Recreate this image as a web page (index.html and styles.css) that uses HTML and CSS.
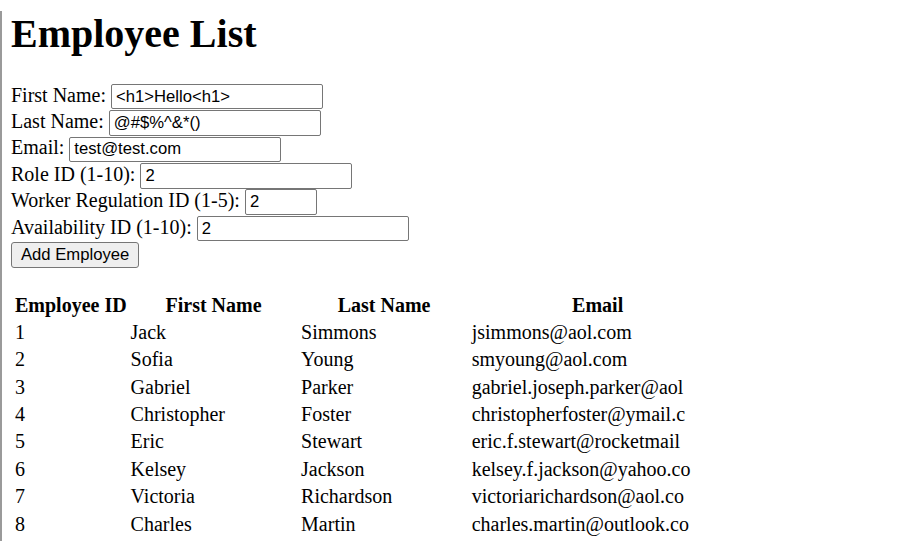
FILE: index.html
```html
<!DOCTYPE html>
<html lang="en">
<head>
<meta charset="utf-8">
<title>Employee List</title>
<link rel="stylesheet" href="styles.css">
</head>
<body>
<div class="page">
  <h1 class="title">Employee List</h1>
  <form class="emp-form">
    <div class="row"><label class="lbl">First Name:</label> <input class="field" type="text" value="&lt;h1&gt;Hello&lt;h1&gt;"></div>
    <div class="row"><label class="lbl">Last Name:</label> <input class="field" type="text" value="@#$%^&amp;*()"></div>
    <div class="row"><label class="lbl">Email:</label> <input class="field" type="text" value="test@test.com"></div>
    <div class="row"><label class="lbl">Role ID (1-10):</label> <input class="field" type="text" value="2"></div>
    <div class="row"><label class="lbl">Worker Regulation ID (1-5):</label> <input class="field field-small" type="text" value="2"></div>
    <div class="row"><label class="lbl">Availability ID (1-10):</label> <input class="field" type="text" value="2"></div>
    <div class="row"><button class="btn" type="button">Add Employee</button></div>
  </form>
  <table class="emp-table">
    <thead>
      <tr><th class="c1">Employee ID</th><th class="c2">First Name</th><th class="c3">Last Name</th><th class="c4">Email</th></tr>
    </thead>
    <tbody>
      <tr><td>1</td><td>Jack</td><td>Simmons</td><td>jsimmons@aol.com</td></tr>
      <tr><td>2</td><td>Sofia</td><td>Young</td><td>smyoung@aol.com</td></tr>
      <tr><td>3</td><td>Gabriel</td><td>Parker</td><td>gabriel.joseph.parker@aol</td></tr>
      <tr><td>4</td><td>Christopher</td><td>Foster</td><td>christopherfoster@ymail.c</td></tr>
      <tr><td>5</td><td>Eric</td><td>Stewart</td><td>eric.f.stewart@rocketmail</td></tr>
      <tr><td>6</td><td>Kelsey</td><td>Jackson</td><td>kelsey.f.jackson@yahoo.co</td></tr>
      <tr><td>7</td><td>Victoria</td><td>Richardson</td><td>victoriarichardson@aol.co</td></tr>
      <tr><td>8</td><td>Charles</td><td>Martin</td><td>charles.martin@outlook.co</td></tr>
    </tbody>
  </table>
</div>
</body>
</html>
```
FILE: styles.css
```css
html, body {
  margin: 0;
  padding: 0;
  height: 100%;
  overflow: hidden;
  background: #ffffff;
}

.page {
  box-sizing: border-box;
  min-height: 100%;
  border-left: 2px solid #9a9a9a;
  padding-left: 9px;
  font-family: "Liberation Serif", "Times New Roman", serif;
  font-size: 20px;
  color: #000;
}

.title {
  margin: 11px 0 0;
  font-size: 40px;
  line-height: 46px;
  font-weight: bold;
}

.emp-form {
  margin: 26.6px 0 0;
}

.row {
  height: 26.4px;
  line-height: 23px;
  white-space: nowrap;
}

.field {
  box-sizing: border-box;
  width: 212px;
  height: 25.5px;
  padding: 0 4px;
  margin: 0;
  border: 1px solid #767676;
  border-radius: 2px;
  font-family: "Liberation Sans", Arial, sans-serif;
  font-size: 16.67px;
  color: #000;
  background: #fff;
}

.field-small {
  width: 72px;
}

.btn {
  box-sizing: border-box;
  height: 25.5px;
  padding: 0 9px;
  margin: 0;
  border: 1px solid #767676;
  border-radius: 3px;
  background: #efefef;
  font-family: "Liberation Sans", Arial, sans-serif;
  font-size: 16.67px;
  color: #000;
}

.emp-table {
  margin: 23px 0 0 1.7px;
  border-collapse: separate;
  border-spacing: 0;
  table-layout: fixed;
  width: 713.3px;
}

.emp-table th,
.emp-table td {
  box-sizing: border-box;
  padding: 2.2px 2.3px;
  line-height: 23px;
  white-space: nowrap;
  vertical-align: baseline;
}

.emp-table th {
  font-weight: bold;
  text-align: center;
}

.emp-table td {
  text-align: left;
  font-weight: normal;
}

.c1 { width: 115.6px; }
.c2 { width: 170.5px; }
.c3 { width: 170.6px; }
.c4 { width: 256.6px; }
```
